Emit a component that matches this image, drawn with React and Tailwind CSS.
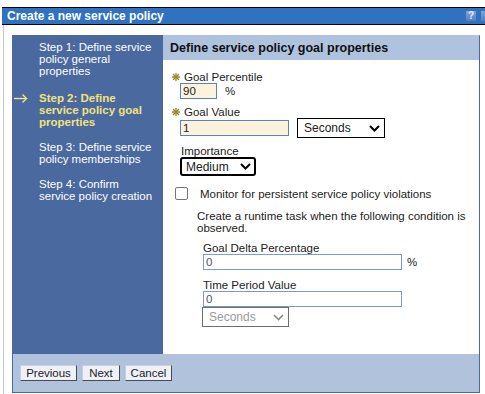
import React from "react";

const Star = () => (
  <svg width="8" height="8" viewBox="0 0 8 8" className="inline-block">
    <g stroke="#9a861c" strokeWidth="1.3" strokeLinecap="round">
      <line x1="4" y1="0.5" x2="4" y2="7.5" />
      <line x1="0.5" y1="4" x2="7.5" y2="4" />
      <line x1="1.5" y1="1.5" x2="6.5" y2="6.5" />
      <line x1="6.5" y1="1.5" x2="1.5" y2="6.5" />
    </g>
  </svg>
);

const Chevron = ({ color = "#000", width = 2 }) => (
  <svg width="11" height="7" viewBox="0 0 11 7">
    <polyline points="1,1 5.5,5.5 10,1" fill="none" stroke={color} strokeWidth={width} />
  </svg>
);

const steps = [
  { lines: ["Step 1: Define service", "policy general", "properties"], mt: "mt-0" },
  { lines: ["Step 2: Define", "service policy goal", "properties"], mt: "mt-[15px]", active: true },
  { lines: ["Step 3: Define service", "policy memberships"], mt: "mt-[13px]" },
  { lines: ["Step 4: Confirm", "service policy creation"], mt: "mt-[13px]" },
];

const WizButton = ({ label, w }) => (
  <button
    className={`${w} h-[16px] bg-[#eef1f8] border border-t-[#c8d0dc] border-l-[#c8d0dc] border-r-[#4a4a4a] border-b-[#4a4a4a] text-[11.5px] leading-[14px] text-[#222] flex items-center justify-center`}
  >
    {label}
  </button>
);

export default function App() {
  return (
    <div
      className="w-[485px] h-[394px] bg-white overflow-hidden text-[11.5px] leading-[12px] text-[#222]"
      style={{ fontFamily: '"Liberation Sans", Arial, sans-serif' }}
    >
      <div className="h-[7px]" />
      {/* title bar */}
      <div className="ml-[2px] w-[490px] h-[18px] border-y border-black bg-[#2f72c2] flex items-center">
        <span className="pl-[5px] text-white font-bold text-[12px]">Create a new service policy</span>
        <div className="ml-auto flex gap-[3px]">
          <div className="w-[12px] h-[12px] bg-gradient-to-b from-[#7aa6db] to-[#4c82c6] border border-[#3f6fae] text-[10px] leading-[10px] font-bold text-[#e8f0fa] flex items-center justify-center">
            ?
          </div>
          <div className="w-[12px] h-[12px] bg-gradient-to-b from-[#7aa6db] to-[#4c82c6] border border-[#3f6fae]" />
        </div>
      </div>

      {/* body */}
      <div className="ml-[3px] h-[369px] border-l border-[#c9c9c9] pl-[8px] pt-[10px]">
        <div className="w-[468px]">
          <div className="flex h-[319px]">
            {/* nav */}
            <div className="w-[151px] bg-[#4a699e] pt-[6px] pl-[27px]">
              {steps.map((s, i) => (
                <div key={i} className={`${s.mt} relative`}>
                  {s.active && (
                    <svg
                      width="14"
                      height="9"
                      viewBox="0 0 14 9"
                      className="absolute left-[-25px] top-[2px]"
                    >
                      <g stroke="#f2e27c" strokeWidth="1.4" fill="none">
                        <line x1="0" y1="4.5" x2="12.5" y2="4.5" />
                        <polyline points="8.5,0.5 12.5,4.5 8.5,8.5" />
                      </g>
                    </svg>
                  )}
                  {s.lines.map((l) => (
                    <div
                      key={l}
                      className={s.active ? "text-[#f2e27c] font-bold" : "text-white"}
                    >
                      {l}
                    </div>
                  ))}
                </div>
              ))}
            </div>

            {/* main panel */}
            <div className="flex-1 flex flex-col border-r border-[#4a699e] border-t border-t-[#b0c3de]">
              <div className="h-[24px] bg-[#b0c3de] flex items-center pl-[7px] font-bold text-[12.5px] text-[#111]">
                Define service policy goal properties
              </div>
              <div className="flex-1 bg-white pl-[9px] pt-[11px]">
                {/* Goal percentile */}
                <div className="flex items-center gap-[4px]">
                  <Star />
                  <span>Goal Percentile</span>
                </div>
                <div className="ml-[8px] flex items-center">
                  <div className="w-[37px] h-[16px] bg-[#fdf3dc] border border-[#5583bb] pl-[2px] leading-[14px]">
                    90
                  </div>
                  <span className="ml-[8px]">%</span>
                </div>

                {/* Goal value */}
                <div className="mt-[7px] flex items-center gap-[4px]">
                  <Star />
                  <span>Goal Value</span>
                </div>
                <div className="ml-[8px] flex items-center">
                  <div className="w-[109px] h-[16px] bg-[#fdf3dc] border border-[#5583bb] pl-[2px] leading-[14px]">
                    1
                  </div>
                  <div className="ml-[8px] w-[88px] h-[20px] border border-black bg-white flex items-center pl-[6px] pr-[4px] justify-between">
                    <span className="text-[12px]">Seconds</span>
                    <Chevron />
                  </div>
                </div>

                {/* Importance */}
                <div className="mt-[7px] ml-[9px]">Importance</div>
                <div className="ml-[8px] w-[76px] h-[19px] border-2 border-black rounded-[3px] bg-white flex items-center justify-between pl-[4px] pr-[3px]">
                  <span className="text-[12px]">Medium</span>
                  <Chevron />
                </div>

                {/* Monitor */}
                <div className="mt-[11px] ml-[3px] flex items-center">
                  <div className="w-[13px] h-[13px] border border-[#767676] rounded-[2px] bg-white" />
                  <span className="ml-[12px]">Monitor for persistent service policy violations</span>
                </div>
                <div className="mt-[10px] ml-[25px]">
                  Create a runtime task when the following condition is
                  <br />
                  observed.
                </div>

                <div className="ml-[31px]">
                  <div className="mt-[8px]">Goal Delta Percentage</div>
                  <div className="flex items-center">
                    <div className="w-[199px] h-[16px] border border-[#7b9cc6] pl-[2px] leading-[14px] text-[#555]">
                      0
                    </div>
                    <span className="ml-[5px]">%</span>
                  </div>
                  <div className="mt-[9px]">Time Period Value</div>
                  <div className="w-[199px] h-[16px] border border-[#7b9cc6] pl-[2px] leading-[14px] text-[#555]">
                    0
                  </div>
                  <div className="-ml-[1px] w-[87px] h-[20px] border border-[#6d6d6d] bg-white flex items-center justify-between pl-[6px] pr-[4px]">
                    <span className="text-[12px] text-[#9a9a9a]">Seconds</span>
                    <Chevron color="#8a8a8a" width={1.6} />
                  </div>
                </div>
              </div>
            </div>
          </div>

          {/* footer */}
          <div className="h-[39px] bg-[#b0c2dc] border-x border-b border-[#4a699e] flex items-center pl-[7px] gap-[5px]">
            <WizButton label="Previous" w="w-[57px]" />
            <WizButton label="Next" w="w-[38px]" />
            <WizButton label="Cancel" w="w-[47px]" />
          </div>
        </div>
      </div>
    </div>
  );
}
